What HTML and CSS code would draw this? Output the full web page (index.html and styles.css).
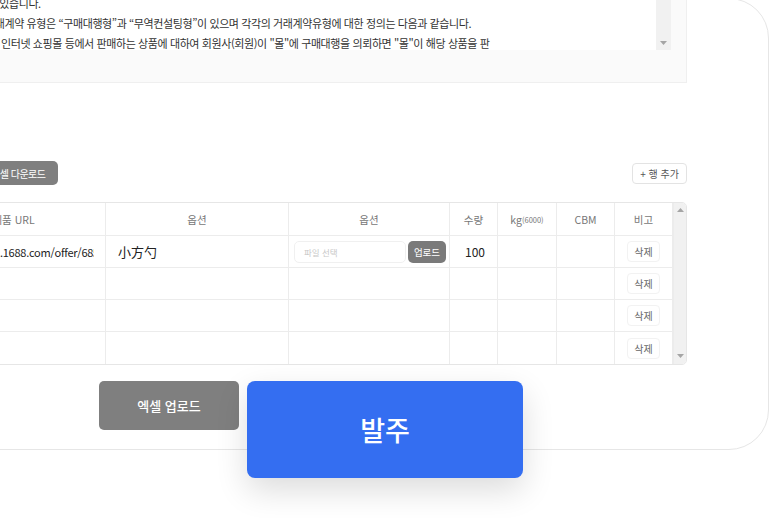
FILE: index.html
```html
<!DOCTYPE html>
<html lang="ko">
<head>
<meta charset="utf-8">
<title>발주</title>
<link rel="stylesheet" href="styles.css">
</head>
<body>
<div class="card">
  <div class="terms">
    <div class="terms-inner">
      <div class="terms-text">
        <div class="line">제1조 (목적) 본 약관은 회원이 "몰"에서 제공하는 서비스를</div>
        <div class="line">이용함에 있어 필요한 사항을 규정합니다.</div>
        <div class="line l1">이용할 수 있습니다.</div>
        <div class="line l2">거래계약 유형은 “구매대행형”과 “무역컨설팅형”이 있으며 각각의 거래계약유형에 대한 정의는 다음과 같습니다.</div>
        <div class="line l3">인터넷 쇼핑몰 등에서 판매하는 상품에 대하여 회원사(회원)이 "몰"에 구매대행을 의뢰하면 "몰"이 해당 상품을 판</div>
      </div>
      <div class="vscroll">
        <svg class="arrow" width="7" height="4" viewBox="0 0 7 4"><path d="M0 0H7L3.5 4Z" fill="#a5a5a5"/></svg>
      </div>
    </div>
  </div>

  <div class="toolbar">
    <button class="btn-dark btn-download">엑셀 다운로드</button>
    <button class="btn-add">+ 행 추가</button>
  </div>

  <div class="table">
    <div class="grid">
      <div class="th">제품 URL</div>
      <div class="th">옵션</div>
      <div class="th">옵션</div>
      <div class="th">수량</div>
      <div class="th">kg<small>(6000)</small></div>
      <div class="th">CBM</div>
      <div class="th">비고</div>

      <div class="td"><span class="url">https://detail.1688.com/offer/685912345678.html</span></div>
      <div class="td"><span class="opt">小方勺</span></div>
      <div class="td file-cell"><span class="file-input">파일 선택</span><button class="btn-upload">업로드</button></div>
      <div class="td"><span class="qty">100</span></div>
      <div class="td"></div>
      <div class="td"></div>
      <div class="td center"><button class="btn-del">삭제</button></div>

      <div class="td"></div><div class="td"></div><div class="td"></div><div class="td"></div><div class="td"></div><div class="td"></div>
      <div class="td center"><button class="btn-del">삭제</button></div>

      <div class="td"></div><div class="td"></div><div class="td"></div><div class="td"></div><div class="td"></div><div class="td"></div>
      <div class="td center"><button class="btn-del">삭제</button></div>

      <div class="td last"></div><div class="td last"></div><div class="td last"></div><div class="td last"></div><div class="td last"></div><div class="td last"></div>
      <div class="td last center"><button class="btn-del">삭제</button></div>
    </div>
    <div class="tscroll">
      <svg width="7" height="4" viewBox="0 0 7 4"><path d="M0 4H7L3.5 0Z" fill="#a5a5a5"/></svg>
      <svg width="7" height="4" viewBox="0 0 7 4"><path d="M0 0H7L3.5 4Z" fill="#a5a5a5"/></svg>
    </div>
  </div>

  <div class="actions">
    <button class="btn-excel">엑셀 업로드</button>
    <button class="btn-order">발주</button>
  </div>
</div>
</body>
</html>
```

FILE: styles.css
```css
* { box-sizing: border-box; }
html, body {
  margin: 0;
  padding: 0;
  background: #ffffff;
  overflow: hidden;
  width: 771px;
  height: 518px;
}
body {
  font-family: "Noto Sans CJK KR", "Noto Sans", sans-serif;
  color: #222;
}
button {
  font-family: inherit;
  border: none;
  cursor: pointer;
  padding: 0;
}
.card {
  width: 930px;
  margin: -2px 0 0 -161px;
  border: 1px solid #e6e6e6;
  border-radius: 40px;
  padding: 0 81px 19px 81px;
  background: #fff;
}
.terms {
  margin-top: -60px;
  border: 1px solid #efefef;
  background: #fafafa;
  padding: 10px 15px 32px 15px;
}
.terms-inner {
  display: flex;
  height: 100px;
  background: #fff;
}
.terms-text {
  flex: 1;
  overflow: hidden;
  padding: 3px 8px;
  font-size: 11px;
  line-height: 20px;
  color: #333;
  letter-spacing: -0.4px;
}
.line { white-space: nowrap; }
.l1 { text-indent: 10px; }
.l2 { text-indent: 40px; }
.l3 { text-indent: 56px; }
.vscroll {
  width: 15px;
  background: #f1f1f1;
  display: flex;
  flex-direction: column;
  justify-content: flex-end;
  align-items: center;
  padding-bottom: 5px;
}

.toolbar {
  margin-top: 78px;
  height: 24px;
  display: flex;
  justify-content: space-between;
  align-items: center;
}
.btn-dark {
  background: #7f7f7f;
  color: #fff;
}
.btn-download {
  margin-left: 58px;
  height: 24px;
  padding: 0 12px;
  border-radius: 5px;
  font-size: 10px;
  letter-spacing: -0.5px;
}
.btn-add {
  height: 21px;
  width: 55px;
  border: 1px solid #e3e3e3;
  background: #fff;
  border-radius: 4px;
  font-size: 10px;
  color: #555;
}

.table {
  margin-top: 17px;
  display: flex;
  border: 1px solid #e6e6e6;
  border-radius: 0 5px 5px 0;
  overflow: hidden;
}
.grid {
  display: grid;
  grid-template-columns: 184px 183px 161px 48px 59px 58px 58px;
  grid-template-rows: 33px repeat(4, 32px);
}
.th, .td {
  border-right: 1px solid #ececec;
  border-bottom: 1px solid #ececec;
  display: flex;
  align-items: center;
  overflow: hidden;
}
.th {
  justify-content: center;
  font-size: 10.5px;
  color: #777;
}
.th small { font-size: 7.5px; margin-top: 1px; }
.td.last { border-bottom: none; }
.td.center { justify-content: center; }
.url {
  display: block;
  flex: 1;
  min-width: 0;
  margin-left: 14px;
  margin-right: 11px;
  white-space: nowrap;
  font-size: 11px;
  letter-spacing: -0.25px;
  color: #222;
  overflow: hidden;
}
.opt {
  padding-left: 12px;
  font-size: 13px;
  color: #222;
}
.file-cell { padding-left: 5px; gap: 2px; }
.file-input {
  width: 112px;
  height: 22px;
  border: 1px solid #f0f0f0;
  border-radius: 5px;
  font-size: 8.5px;
  color: #c8c8c8;
  display: flex;
  align-items: center;
  padding-left: 9px;
}
.btn-upload {
  width: 38px;
  height: 22px;
  border-radius: 5px;
  background: #7a7a7a;
  color: #fff;
  font-size: 9.5px;
}
.qty {
  padding-left: 15px;
  font-size: 12px;
  color: #222;
}
.btn-del {
  width: 33px;
  height: 21px;
  background: #fff;
  border: 1px solid #f2f2f2;
  border-radius: 4px;
  font-size: 10px;
  color: #666;
}
.tscroll {
  width: 15px;
  background: #f1f1f1;
  border-left: 1px solid #ececec;
  display: flex;
  flex-direction: column;
  justify-content: space-between;
  align-items: center;
  padding: 5px 0 6px;
}

.actions {
  margin-top: 16px;
  height: 49px;
  display: flex;
  justify-content: center;
  align-items: flex-start;
  gap: 8px;
  padding-left: 14px;
}
.btn-excel {
  width: 140px;
  height: 49px;
  background: #7f7f7f;
  color: #fff;
  border-radius: 5px;
  font-size: 13px;
  font-weight: 500;
}
.btn-order {
  width: 276px;
  height: 97px;
  background: #346ef1;
  color: #fff;
  border-radius: 8px;
  font-size: 27px;
  font-weight: 500;
  box-shadow: 0 12px 32px rgba(0, 0, 0, 0.14);
}
```
